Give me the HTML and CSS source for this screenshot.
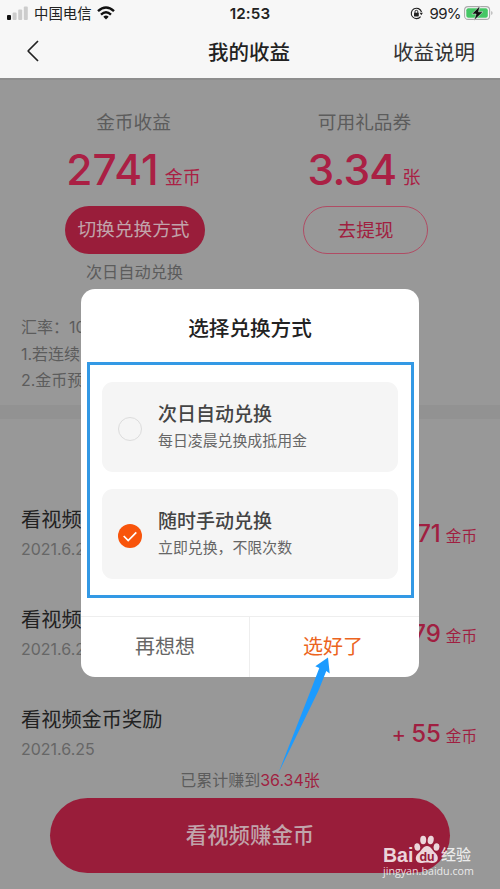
FILE: index.html
```
<!DOCTYPE html>
<html lang="zh-CN">
<head>
<meta charset="utf-8">
<title>我的收益</title>
<link rel="stylesheet" href="styles.css">
</head>
<body>
<div class="screen">
  <header class="top">
    <div class="status">
      <div class="carrier">
        <svg class="signal" width="22" height="14" viewBox="0 0 22 14"><rect x="0" y="9" width="4" height="5" rx="1" fill="#111"/><rect x="5.6" y="6.5" width="4" height="7.5" rx="1" fill="#ccc"/><rect x="11.2" y="3.5" width="4" height="10.5" rx="1" fill="#ccc"/><rect x="16.8" y="0.5" width="4" height="13.5" rx="1" fill="#ccc"/></svg>
        <span>中国电信</span>
        <svg class="wifi" width="18" height="14" viewBox="0 0 18 14"><g fill="none" stroke="#111" stroke-width="2.4"><path d="M1 5.2Q9-2.3 17 5.2"/><path d="M4 8.6Q9 4 14 8.6"/></g><path d="M6.3 10.7Q9 8.4 11.7 10.7L9 13.4Z" fill="#111"/></svg>
      </div>
      <div class="time">12:53</div>
      <div class="power">
        <svg width="13" height="13" viewBox="0 0 13 13"><path d="M11.5 5A5.2 5.2 0 1 0 10.6 9.6" fill="none" stroke="#222" stroke-width="1.1"/><path d="M9.6 5.8h3.3l-1.6 2.4z" fill="#222"/><rect x="4" y="5.7" width="4.8" height="3.7" rx=".6" fill="#222"/><path d="M5 6V4.7a1.4 1.4 0 0 1 2.8 0V6" fill="none" stroke="#222"/></svg>
        <span>99%</span>
        <svg width="29" height="16" viewBox="0 0 29 16"><rect x=".6" y="1.6" width="25" height="12.8" rx="3.5" fill="#fafafa" stroke="#aaa" stroke-width="1.1"/><rect x="2.3" y="3.3" width="21.5" height="9.4" rx="2" fill="#45c765"/><path d="M27.3 6v4q1.2-.5 1.2-2t-1.2-2z" fill="#aaa"/><path d="M16 .8 7.8 9h4.3L10 15.500l9-8.700h-4.500z" fill="#111" stroke="#f7f7f7" stroke-width=".5"/></svg>
      </div>
    </div>
    <nav class="nav">
      <svg class="back" width="12" height="22" viewBox="0 0 12 22"><path d="M11 1 1.500 10.500Q1 11 1.500 11.500L11 21" fill="none" stroke="#222" stroke-width="1.7"/></svg>
      <h1>我的收益</h1>
      <a class="help">收益说明</a>
    </nav>
  </header>

  <main class="page">
    <section class="summary">
      <div class="account">
        <div class="label">金币收益</div>
        <div class="amount"><b>2741</b><span>金币</span></div>
        <div class="pill filled">切换兑换方式</div>
        <div class="hint">次日自动兑换</div>
      </div>
      <div class="account second">
        <div class="label">可用礼品券</div>
        <div class="amount"><b>3.34</b><span>张</span></div>
        <div class="pill outline">去提现</div>
      </div>
    </section>
    <section class="rules"><p>汇率：10</p><p>1.若连续</p><p>2.金币预</p></section>
    <div class="band"></div>
    <section class="records">
      <div class="record"><div><div class="name">看视频</div><div class="date">2021.6.2</div></div><div class="gain"><b>71</b><span>金币</span></div></div>
      <div class="record"><div><div class="name">看视频</div><div class="date">2021.6.2</div></div><div class="gain"><b>79</b><span>金币</span></div></div>
      <div class="record"><div><div class="name">看视频金币奖励</div><div class="date">2021.6.25</div></div><div class="gain"><i>+</i><b>55</b><span>金币</span></div></div>
    </section>
    <div class="total">已累计赚到<em>36.34张</em></div>
    <div class="watch">看视频赚金币</div>
  </main>

  <section class="modal">
    <h2>选择兑换方式</h2>
    <div class="options">
      <div class="option"><span class="radio"></span><div><div class="opt-title">次日自动兑换</div><div class="opt-text">每日凌晨兑换成抵用金</div></div></div>
      <div class="option"><span class="radio checked"><svg width="24" height="24" viewBox="0 0 24 24"><path d="m5.7 12 4.500 4.600 8.100-8.200" fill="none" stroke="#fff" stroke-width="1.7"/></svg></span><div><div class="opt-title">随时手动兑换</div><div class="opt-text">立即兑换，不限次数</div></div></div>
    </div>
    <footer class="actions"><div class="cancel">再想想</div><div class="confirm">选好了</div></footer>
  </section>

  <svg class="arrow" width="60" height="120" viewBox="0 0 60 120"><path d="M53 .5 40.3 9.2 44.3 11 35.500 34 3 117 43.300 34 51.300 14 54.700 16.500Z" fill="#1c9bff"/></svg>

  <div class="watermark">
    <div class="brand"><span class="latin">Bai</span><svg width="26" height="29" viewBox="0 0 26 29"><g fill="currentColor"><ellipse cx="3.3" cy="12" rx="2.9" ry="3.8" transform="rotate(-12 3.3 12)"/><ellipse cx="9.2" cy="5" rx="3" ry="4.2"/><ellipse cx="16.7" cy="5" rx="3" ry="4.2" transform="rotate(10 16.7 5)"/><ellipse cx="22.5" cy="12" rx="2.9" ry="3.8" transform="rotate(10 22.5 12)"/><path d="M13 11c4 0 5 4.3 8.3 7 4.5 4 2.5 10-2.3 10-2.5 0-3.5-.6-6-.6s-3.700.6-6.300.6c-5 0-7-6-2-10C8 15.300 9 11 13 11z"/></g><text x="13" y="25.500" text-anchor="middle" class="du">du</text></svg><span class="cn">经验</span></div>
    <div class="site">jingyan.baidu.com</div>
  </div>
</div>
</body>
</html>
```
FILE: styles.css
```
* { box-sizing: border-box; margin: 0; padding: 0; }
body { width: 500px; height: 889px; overflow: hidden; font-family: Inter, "Noto Sans CJK SC", sans-serif; }
b, i, em { font-style: normal; }
.screen { position: relative; width: 500px; height: 889px; display: flex; flex-direction: column; overflow: hidden; background: #989898; white-space: nowrap; }

.top { height: 78px; background: #f7f7f7; color: #222; }
.status { height: 25px; display: grid; grid-template-columns: 1fr auto 1fr; align-items: center; padding: 0 7px 0 7px; }
.carrier { display: flex; align-items: center; font-size: 14.4px; line-height: 24px; }
.carrier span { padding-top: 2px; }
.signal { margin-right: 5px; }
.wifi { margin-left: 5px; }
.time { font-size: 15.2px; font-weight: 600; letter-spacing: .1px; }
.power { display: flex; align-items: center; justify-content: flex-end; font-size: 15px; }
.power span { margin: 0 3px 0 6px; letter-spacing: -.6px; }
.nav { height: 51px; display: grid; grid-template-columns: 1fr auto 1fr; align-items: center; padding: 0 25px 0 27px; }
.nav h1 { margin-left: -4px; font-size: 20.5px; font-weight: 500; }
.help { justify-self: end; font-size: 20.5px; color: #333; }

.page { flex: 1; display: flex; flex-direction: column; border-top: 2px solid #8e8e8e; color: #5c5c5c; }
.summary { display: flex; height: 234px; padding: 30px 0 0 19px; }
.account { width: 231px; display: flex; flex-direction: column; align-items: center; }
.label { margin-left: -2px; font-size: 18.7px; line-height: 26px; }
.amount { height: 50px; margin: 9px 2px 0 0; display: flex; align-items: baseline; color: #aa2044; font-size: 18px; line-height: 50px; }
.amount b { font-size: 42.500px; font-weight: 500; margin-right: 6px; }
.second .amount b { letter-spacing: -.8px; }
.second .amount { margin-right: 3px; }
.amount span { position: relative; top: -1px; }
.pill { height: 48px; margin-top: 11px; border-radius: 24px; font-size: 18.700px; line-height: 48px; text-align: center; }
.filled { width: 140px; padding-right: 2px; background: #991d3a; color: #c1a4ab; }
.outline { width: 125px; border: 1px solid #b04c64; color: #a01f40; line-height: 47px; }
.hint { margin-top: 6px; font-size: 16.200px; line-height: 24px; }
.rules { height: 91px; padding-left: 21px; font-size: 16px; line-height: 26.500px; }
.band { height: 14px; background: #929292; }
.records { height: 349px; padding: 86px 23px 0 21px; }
.record { height: 100px; display: flex; justify-content: space-between; }
.name { font-size: 20.200px; line-height: 30px; color: #222; }
.date { margin-top: 1px; font-size: 16px; line-height: 26px; color: #666; }
.gain { display: flex; align-items: baseline; padding-top: 14px; color: #a01f41; font-size: 15.600px; line-height: 30px; }
.gain b { font-size: 24px; font-weight: 500; margin-right: 5px; }
.gain i { font-size: 22px; margin-right: 5px; }
.total { height: 30px; text-align: center; font-size: 16px; line-height: 24px; }
.total em { color: #a01f41; }
.watch { width: 400px; height: 75px; align-self: center; border-radius: 38px; background: #991d3a; color: #c1a4ab; font-size: 21.400px; font-weight: 500; line-height: 74px; text-align: center; }

.modal { position: absolute; left: 81px; top: 289px; width: 338px; height: 388px; display: flex; flex-direction: column; border-radius: 14px; background: #fff; overflow: hidden; }
.modal h2 { height: 73px; padding-top: 25px; font-size: 20.600px; line-height: 30px; font-weight: 500; text-align: center; color: #222; }
.options { width: 327px; height: 236px; margin-left: 6px; border: 3px solid #3399e5; padding: 17px 13px 0 12px; display: flex; flex-direction: column; gap: 17px; }
.option { height: 90px; display: flex; padding: 18px 16px 0; border-radius: 11px; background: #f5f5f5; gap: 16px; }
.radio { width: 24px; height: 24px; margin-top: 17px; border: 1px solid #dcdcdc; border-radius: 50%; }
.checked { border: 0; background: #f8540b; }
.checked svg { display: block; }
.opt-title { padding-top: 1px; font-size: 19px; line-height: 27px; font-weight: 500; color: #444; }
.opt-text { font-size: 14.900px; line-height: 26px; color: #666; }
.actions { height: 61px; margin-top: auto; display: flex; border-top: 1px solid #eee; font-size: 20px; line-height: 61px; text-align: center; color: #666; }
.cancel { width: 168px; }
.confirm { flex: 1; padding-right: 3px; border-left: 1px solid #eee; color: #ec6420; }

.arrow { position: absolute; left: 275px; top: 657px; }
.watermark { position: absolute; left: 383px; top: 835px; color: rgba(255, 255, 255, .82); }
.brand { height: 29px; display: flex; align-items: flex-end; }
.latin { font: 700 19.500px/18px "Liberation Sans", sans-serif; width: 31px; }
.cn { margin-left: 1px; font-size: 15px; line-height: 18px; font-weight: 500; }
.du { font: 700 12px Inter, sans-serif; fill: #991d3a; }
.site { font: 10.700px/14px "Open Sans", sans-serif; }
```
